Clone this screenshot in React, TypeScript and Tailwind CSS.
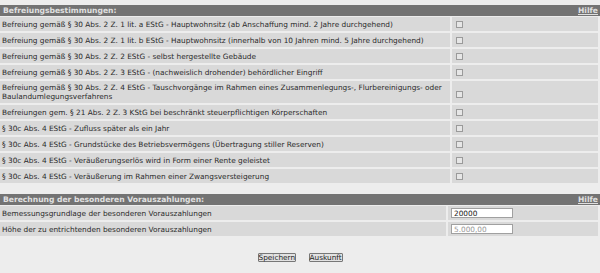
const ROWS: { text: string; double?: boolean }[] = [
  { text: "Befreiung gemäß § 30 Abs. 2 Z. 1 lit. a EStG - Hauptwohnsitz (ab Anschaffung mind. 2 Jahre durchgehend)" },
  { text: "Befreiung gemäß § 30 Abs. 2 Z. 1 lit. b EStG - Hauptwohnsitz (innerhalb von 10 Jahren mind. 5 Jahre durchgehend)" },
  { text: "Befreiung gemäß § 30 Abs. 2 Z. 2 EStG - selbst hergestellte Gebäude" },
  { text: "Befreiung gemäß § 30 Abs. 2 Z. 3 EStG - (nachweislich drohender) behördlicher Eingriff" },
  {
    text: "Befreiung gemäß § 30 Abs. 2 Z. 4 EStG - Tauschvorgänge im Rahmen eines Zusammenlegungs-, Flurbereinigungs- oder Baulandumlegungsverfahrens",
    double: true,
  },
  { text: "Befreiungen gem. § 21 Abs. 2 Z. 3 KStG bei beschränkt steuerpflichtigen Körperschaften" },
  { text: "§ 30c Abs. 4 EStG - Zufluss später als ein Jahr" },
  { text: "§ 30c Abs. 4 EStG - Grundstücke des Betriebsvermögens (Übertragung stiller Reserven)" },
  { text: "§ 30c Abs. 4 EStG - Veräußerungserlös wird in Form einer Rente geleistet" },
  { text: "§ 30c Abs. 4 EStG - Veräußerung im Rahmen einer Zwangsversteigerung" },
];

function Header({ title }: { title: string }) {
  return (
    <div className="flex h-[11px] items-center justify-between bg-[#737373] pl-[3px] pr-[2px] text-[7.6px] font-bold text-[#e0e0e0]">
      <span>{title}</span>
      <span className="underline">Hilfe</span>
    </div>
  );
}

function Checkbox() {
  return <span className="block h-[7px] w-[7px] border border-[#9a9a9a] bg-[#e6e6e6]" />;
}

export default function App() {
  return (
    <div
      className="min-h-[273px] w-[600px] bg-[#ededed] pt-[5px] text-[7.35px] leading-[9px] text-[#2a2a2a]"
      style={{ fontFamily: '"DejaVu Sans", Verdana, sans-serif' }}
    >
      <Header title="Befreiungsbestimmungen:" />
      <div className="mt-[1px] flex w-[598px] flex-col gap-[2px]">
        {ROWS.map((r) => (
          <div key={r.text} className={`flex gap-[2px] ${r.double ? "h-[22px]" : "h-[14px]"}`}>
            <div className="flex flex-1 items-center bg-[#d9d9d9] pl-[2px] pr-[4px]">
              <span>{r.text}</span>
            </div>
            <div className={`flex w-[146px] bg-[#d9d9d9] pl-[4px] ${r.double ? "items-end pb-[5px]" : "items-center"}`}>
              <Checkbox />
            </div>
          </div>
        ))}
      </div>

      <div className="mt-[11px]">
        <Header title="Berechnung der besonderen Vorauszahlungen:" />
      </div>
      <div className="mt-[1px] flex w-[598px] flex-col gap-[2px]">
        <div className="flex h-[14px] gap-[2px]">
          <div className="flex flex-1 items-center bg-[#d9d9d9] pl-[2px]">Bemessungsgrundlage der besonderen Vorauszahlungen</div>
          <div className="flex w-[150px] items-center bg-[#d9d9d9] pl-[3px]">
            <input
              readOnly
              value="20000"
              className="h-[10px] w-[62px] border border-[#a0a0a0] bg-white px-[2px] text-[7.35px] leading-[8px] text-[#222] outline-none"
            />
          </div>
        </div>
        <div className="flex h-[14px] gap-[2px]">
          <div className="flex flex-1 items-center bg-[#d9d9d9] pl-[2px]">Höhe der zu entrichtenden besonderen Vorauszahlungen</div>
          <div className="flex w-[150px] items-center bg-[#d9d9d9] pl-[3px]">
            <input
              readOnly
              value="5.000,00"
              className="h-[10px] w-[62px] border border-[#a0a0a0] bg-white px-[2px] text-[7.35px] leading-[8px] text-[#999] outline-none"
            />
          </div>
        </div>
      </div>

      <div className="mt-[17px] flex justify-center gap-[13px]">
        <button className="h-[9px] w-[38px] rounded-[1px] border border-[#777] bg-[#e2e2e2] text-[7.35px] leading-[7px] text-[#222]">
          Speichern
        </button>
        <button className="h-[9px] w-[34px] rounded-[1px] border border-[#777] bg-[#e2e2e2] text-[7.35px] leading-[7px] text-[#222]">
          Auskunft
        </button>
      </div>
    </div>
  );
}
